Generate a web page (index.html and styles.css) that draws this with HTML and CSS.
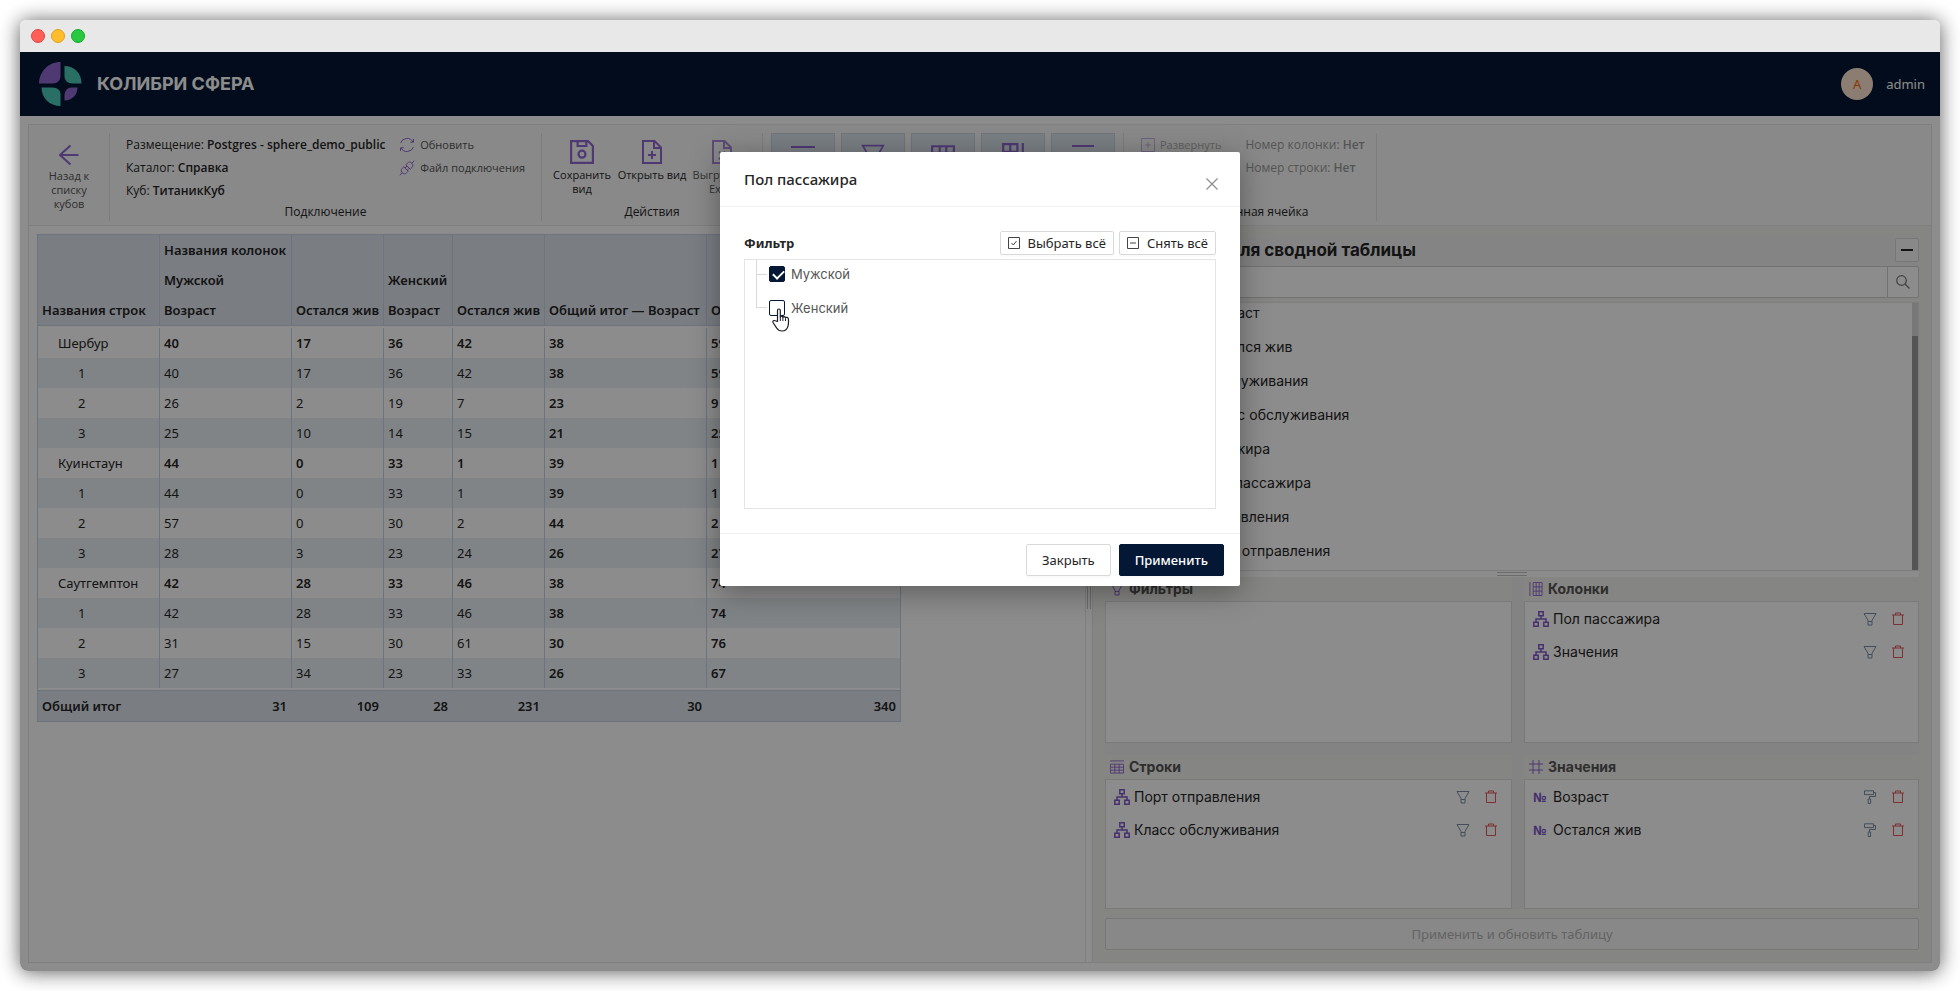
FILE: index.html
```html
<!DOCTYPE html>
<html lang="ru">
<head>
<meta charset="utf-8">
<title>Колибри Сфера</title>
<link rel="stylesheet" href="styles.css">
</head>
<body>
<svg class="sprite" aria-hidden="true">
  <symbol id="i-back" viewBox="0 0 20 20"><path d="M19.500 10H1M11.500 .5 1 10l10.500 9.500"/></symbol>
  <symbol id="i-refresh" viewBox="0 0 16 16"><path d="M1.600 6A6.800 6.800 0 0 1 14 5M14.400 10A6.800 6.800 0 0 1 2 11M14.500 2v3.200h-3.200M1.500 14v-3.200h3.200"/></symbol>
  <symbol id="i-plug" viewBox="0 0 16 16"><path d="M.8 15.200 3.200 12.800M15.200.8l-2.400 2.400M3.200 12.800c-1.400-1.400-1.400-3 0-4.400l1.600-1.600 4.400 4.400-1.600 1.600c-1.400 1.400-3 1.400-4.400 0zM12.800 3.200c-1.400-1.400-3-1.400-4.400 0L6.800 4.800l4.400 4.400 1.600-1.600c1.400-1.400 1.400-3 0-4.400zM6 8l2-2M8.500 10l1.500-1.500"/></symbol>
  <symbol id="i-save" viewBox="0 0 22 22"><path d="M1 1h15.500L21 5.500V21H1zM7 1v4.500h8V1"/><circle cx="11" cy="13" r="3.200"/></symbol>
  <symbol id="i-fileadd" viewBox="0 0 20 24"><path d="M1 1h11.500L19 7.500V23H1zM12 1v7h7M10 11v8M6 15h8"/></symbol>
  <symbol id="i-filex" viewBox="0 0 20 24"><path d="M1 1h11.500L19 7.500V23H1zM12 1v7h7M7 11.500l6 8M13 11.500l-6 8"/></symbol>
  <symbol id="i-lines" viewBox="0 0 24 22"><path d="M0 3h24M0 9h4M7 9h17M0 15h4M7 15h17M0 21h24"/></symbol>
  <symbol id="i-funnel" viewBox="0 0 14 14"><path d="M1 1.500h12L9 8.500v4.500H5V8.500zM5 9.500h4"/></symbol>
  <symbol id="i-grid" viewBox="0 0 22 22"><path d="M1 3h20v18H1zM1 9h20M1 15h20M8 3v18M14 3v18"/></symbol>
  <symbol id="i-gridbar" viewBox="0 0 20 22"><path d="M1 1h13v20H1zM1 8h13M1 14h13M7.500 1v20M19 0v22"/></symbol>
  <symbol id="i-expand" viewBox="0 0 14 14"><path d="M.5.5h13v13H.5zM7 4v6M4 7h6"/></symbol>
  <symbol id="i-cols" viewBox="0 0 14 15"><path d="M.5 0v15M4 .5h9.500v14H4zM4 5.200h9.500M4 9.800h9.500M7.200 .5v14M10.400 .5v14"/></symbol>
  <symbol id="i-rows" viewBox="0 0 15 14"><path d="M0 .5h15M.5 4h14v9.500H.5zM.5 7.200h14M.5 10.400h14M5.200 4v9.500M9.800 4v9.500"/></symbol>
  <symbol id="i-hash" viewBox="0 0 14 14"><path d="M4 0v14M10 0v14M0 4h14M0 10h14"/></symbol>
  <symbol id="i-tree" viewBox="0 0 16 16"><path d="M5.800.8h4.400v4H5.800zM.8 11.200h4.400v4H.8zM10.800 11.200h4.400v4h-4.400zM8 4.800V8M3 11V8h10v3"/></symbol>
  <symbol id="i-trash" viewBox="0 0 12 14"><path d="M0 3h12M3.500 3V1h5v2M1.500 3v9.500h9V3"/></symbol>
  <symbol id="i-roller" viewBox="0 0 12 14"><path d="M.5.8h9v3.800h-9zM9.500 2.500h2v4h-6V9M4.200 9h2.400v4.500H4.200z"/></symbol>
  <symbol id="i-search" viewBox="0 0 14 14"><circle cx="5.500" cy="5.500" r="4.800"/><path d="M9 9l4.500 4.500"/></symbol>
  <symbol id="i-check" viewBox="0 0 12 12"><path d="M.5.5h11v11H.5zM3.500 6l1.800 2 3.200-4"/></symbol>
  <symbol id="i-minus" viewBox="0 0 12 12"><path d="M.5.5h11v11H.5zM3 6h6"/></symbol>
  <symbol id="i-close" viewBox="0 0 12 12"><path d="M.5.5l11 11M11.500.5l-11 11"/></symbol>
</svg>

<div class="window">
  <div class="titlebar"><i class="dot red"></i><i class="dot yellow"></i><i class="dot green"></i></div>
  <div class="app">
    <header class="header">
      <svg class="logo" viewBox="0 0 43 44" aria-hidden="true">
        <path fill="#9068cf" d="M21.500 0v14c0 4-3 7.500-8 7.500H0C0 10 9 0 21.500 0z"/>
        <path fill="#4bcabb" d="M25.500 4C35 4 42.500 11 42.500 21.500h-9c-5 0-8-3-8-7.500z"/>
        <path fill="#4bcabb" d="M2.500 25.500h11c5 0 8 3 8 7V44C10.500 44 2.500 36 2.500 25.500z"/>
        <path fill="#9068cf" d="M38.500 25.500C38.500 33 33 38.500 25.500 38.500v-5c0-5 3-8 7-8z"/>
      </svg>
      <span class="brand">КОЛИБРИ СФЕРА</span>
      <span class="avatar">A</span>
      <span class="user">admin</span>
    </header>

    <main class="content">
      <div class="toolbar">
        <div class="group back-group">
          <button class="tool back"><svg class="ic ic20"><use href="#i-back"/></svg><span>Назад к списку кубов</span></button>
        </div>
        <div class="group conn">
          <div class="conn-cols">
            <div class="facts">
              <span>Размещение: <b>Postgres - sphere_demo_public</b></span>
              <span>Каталог: <b>Справка</b></span>
              <span>Куб: <b>ТитаникКуб</b></span>
            </div>
            <div class="facts">
              <button class="mini"><svg class="ic ic16"><use href="#i-refresh"/></svg>Обновить</button>
              <button class="mini"><svg class="ic ic16"><use href="#i-plug"/></svg>Файл подключения</button>
            </div>
          </div>
          <div class="caption">Подключение</div>
        </div>
        <div class="group actions">
          <div class="tools">
            <button class="tool"><svg class="ic ic24 bold"><use href="#i-save"/></svg><span>Сохранить вид</span></button>
            <button class="tool"><svg class="ic ic24 bold"><use href="#i-fileadd"/></svg><span>Открыть&nbsp;вид</span></button>
            <button class="tool dim"><svg class="ic ic24 bold"><use href="#i-filex"/></svg><span>Выгрузка&nbsp;в Excel</span></button>
          </div>
          <div class="caption">Действия</div>
        </div>
        <div class="group view">
          <div class="toggles">
            <button class="toggle" aria-label="Список полей"><svg class="ic ic24 bold"><use href="#i-lines"/></svg></button>
            <button class="toggle" aria-label="Фильтры"><svg class="ic ic24"><use href="#i-funnel"/></svg></button>
            <button class="toggle" aria-label="Строки"><svg class="ic ic24 bold"><use href="#i-grid"/></svg></button>
            <button class="toggle" aria-label="Колонки"><svg class="ic ic24 bold"><use href="#i-gridbar"/></svg></button>
            <button class="toggle" aria-label="Итоги"><i class="bar"></i></button>
          </div>
        </div>
        <div class="group cell">
          <div class="conn-cols faded">
            <div class="facts"><button class="mini"><svg class="ic ic14"><use href="#i-expand"/></svg>Развернуть</button></div>
            <div class="facts"><span>Номер колонки: <b>Нет</b></span><span>Номер строки: <b>Нет</b></span></div>
          </div>
          <div class="caption">Выделенная ячейка</div>
        </div>
      </div>

      <div class="split">
        <section class="sheet">
          <table class="pivot">
            <colgroup><col class="c1"><col class="c2"><col class="c3"><col class="c4"><col class="c5"><col class="c6"><col class="c7"></colgroup>
            <thead>
              <tr><th></th><th>Названия колонок</th><th></th><th></th><th></th><th></th><th></th></tr>
              <tr><th></th><th>Мужской</th><th></th><th>Женский</th><th></th><th></th><th></th></tr>
              <tr><th>Названия строк</th><th>Возраст</th><th>Остался жив</th><th>Возраст</th><th>Остался жив</th><th>Общий итог — Возраст</th><th>Общий итог — Остался жив</th></tr>
            </thead>
            <tbody class="gap"><tr><td colspan="7"></td></tr></tbody>
            <tbody class="rows">
              <tr class="sum"><td>Шербур</td><td>40</td><td>17</td><td>36</td><td>42</td><td>38</td><td>59</td></tr>
              <tr><td>1</td><td>40</td><td>17</td><td>36</td><td>42</td><td>38</td><td>59</td></tr>
              <tr><td>2</td><td>26</td><td>2</td><td>19</td><td>7</td><td>23</td><td>9</td></tr>
              <tr><td>3</td><td>25</td><td>10</td><td>14</td><td>15</td><td>21</td><td>25</td></tr>
              <tr class="sum"><td>Куинстаун</td><td>44</td><td>0</td><td>33</td><td>1</td><td>39</td><td>1</td></tr>
              <tr><td>1</td><td>44</td><td>0</td><td>33</td><td>1</td><td>39</td><td>1</td></tr>
              <tr><td>2</td><td>57</td><td>0</td><td>30</td><td>2</td><td>44</td><td>2</td></tr>
              <tr><td>3</td><td>28</td><td>3</td><td>23</td><td>24</td><td>26</td><td>27</td></tr>
              <tr class="sum"><td>Саутгемптон</td><td>42</td><td>28</td><td>33</td><td>46</td><td>38</td><td>74</td></tr>
              <tr><td>1</td><td>42</td><td>28</td><td>33</td><td>46</td><td>38</td><td>74</td></tr>
              <tr><td>2</td><td>31</td><td>15</td><td>30</td><td>61</td><td>30</td><td>76</td></tr>
              <tr><td>3</td><td>27</td><td>34</td><td>23</td><td>33</td><td>26</td><td>67</td></tr>
            </tbody>
            <tbody class="gap"><tr><td colspan="7"></td></tr></tbody>
            <tfoot><tr><th>Общий итог</th><td>31</td><td>109</td><td>28</td><td>231</td><td>30</td><td>340</td></tr></tfoot>
          </table>
        </section>
        <div class="vsplit"><i class="vgrip"></i></div>
        <aside class="fields">
          <div class="fields-head"><h2>Список полей для сводной таблицы</h2><button class="collapse" aria-label="Свернуть"><i></i></button></div>
          <div class="search"><input type="text" aria-label="Поиск"><button aria-label="Найти"><svg class="ic ic14"><use href="#i-search"/></svg></button></div>
          <div class="list-wrap">
            <ul class="list">
              <li class="deep">Возраст</li><li class="deep">Остался жив</li>
              <li>Класс обслуживания</li><li class="deep">Класс обслуживания</li>
              <li>Пол пассажира</li><li class="deep">Пол пассажира</li>
              <li>Порт отправления</li><li class="deep">Порт отправления</li>
            </ul>
            <div class="track"><i class="thumb"></i></div>
          </div>
          <div class="hsplit"><i class="hgrip"></i></div>
          <div class="zones">
            <section class="zone"><h3><svg class="ic ic14"><use href="#i-funnel"/></svg>Фильтры</h3><div class="box"></div></section>
            <section class="zone"><h3><svg class="ic ic14"><use href="#i-cols"/></svg>Колонки</h3><div class="box">
              <div class="item"><svg class="ic ic16 mid"><use href="#i-tree"/></svg><span>Пол пассажира</span><button aria-label="Фильтр"><svg class="ic ic14 slate"><use href="#i-funnel"/></svg></button><button aria-label="Удалить"><svg class="ic ic14 red-ic"><use href="#i-trash"/></svg></button></div>
              <div class="item"><svg class="ic ic16 mid"><use href="#i-tree"/></svg><span>Значения</span><button aria-label="Фильтр"><svg class="ic ic14 slate"><use href="#i-funnel"/></svg></button><button aria-label="Удалить"><svg class="ic ic14 red-ic"><use href="#i-trash"/></svg></button></div>
            </div></section>
            <section class="zone"><h3><svg class="ic ic14"><use href="#i-rows"/></svg>Строки</h3><div class="box">
              <div class="item"><svg class="ic ic16 mid"><use href="#i-tree"/></svg><span>Порт отправления</span><button aria-label="Фильтр"><svg class="ic ic14 slate"><use href="#i-funnel"/></svg></button><button aria-label="Удалить"><svg class="ic ic14 red-ic"><use href="#i-trash"/></svg></button></div>
              <div class="item"><svg class="ic ic16 mid"><use href="#i-tree"/></svg><span>Класс обслуживания</span><button aria-label="Фильтр"><svg class="ic ic14 slate"><use href="#i-funnel"/></svg></button><button aria-label="Удалить"><svg class="ic ic14 red-ic"><use href="#i-trash"/></svg></button></div>
            </div></section>
            <section class="zone"><h3><svg class="ic ic14"><use href="#i-hash"/></svg>Значения</h3><div class="box">
              <div class="item"><b class="num">№</b><span>Возраст</span><button aria-label="Формат"><svg class="ic ic14 slate"><use href="#i-roller"/></svg></button><button aria-label="Удалить"><svg class="ic ic14 red-ic"><use href="#i-trash"/></svg></button></div>
              <div class="item"><b class="num">№</b><span>Остался жив</span><button aria-label="Формат"><svg class="ic ic14 slate"><use href="#i-roller"/></svg></button><button aria-label="Удалить"><svg class="ic ic14 red-ic"><use href="#i-trash"/></svg></button></div>
            </div></section>
          </div>
          <button class="apply" disabled>Применить и обновить таблицу</button>
        </aside>
      </div>
    </main>

    <div class="overlay">
      <div class="modal" role="dialog" aria-labelledby="modal-title">
        <div class="modal-head"><h1 id="modal-title">Пол пассажира</h1><button class="close" aria-label="Закрыть окно"><svg class="ic ic12"><use href="#i-close"/></svg></button></div>
        <div class="modal-body">
          <div class="filter-head">
            <h4>Фильтр</h4>
            <button class="btn small"><svg class="ic ic12"><use href="#i-check"/></svg>Выбрать всё</button>
            <button class="btn small"><svg class="ic ic12"><use href="#i-minus"/></svg>Снять всё</button>
          </div>
          <div class="tree">
            <label class="node"><i class="branch"></i><input type="checkbox" checked><span>Мужской</span></label>
            <label class="node last"><i class="branch"></i><input type="checkbox"><span>Женский</span></label>
            <svg class="cursor" viewBox="0 0 18 24" aria-hidden="true"><path fill="#fff" stroke="#1b1b2b" stroke-width="1.200" stroke-linejoin="round" d="M5.500 13.500V2.500c0-2 2.800-2 2.800 0V9c.3-1.400 2.500-1.200 2.600.4.500-1.200 2.500-1 2.600.6.600-1 2.700-.8 2.900 1 .2 2.500.1 5-.3 6.800-.8 3.200-2.800 5.200-6.100 5.200-2.800 0-4.300-1.200-5.600-3.300L1 14.500c-.6-1.500.8-2.500 2.200-1.700z"/><path fill="none" stroke="#1b1b2b" d="M8.300 8.500V13M10.900 9.500V13M13.500 10.500V13"/></svg>
          </div>
        </div>
        <div class="modal-foot"><button class="btn">Закрыть</button><button class="btn primary">Применить</button></div>
      </div>
    </div>
  </div>
</div>
</body>
</html>
```
FILE: styles.css
```css
* { box-sizing: border-box; }
body { margin: 0; padding: 20px; height: 100vh; background: #fff; color: #262626; font: 13px/20px "Noto Sans", "Open Sans", sans-serif; }
button { font: inherit; color: inherit; background: none; border: 0; padding: 0; margin: 0; }
h1, h2, h3, h4, ul { margin: 0; padding: 0; }
b { font-weight: 600; }
.sprite { position: absolute; width: 0; height: 0; }
.ic { fill: none; stroke: #9068cf; stroke-width: 1; flex: none; display: block; }
.ic12 { width: 12px; height: 12px; }
.ic14 { width: 14px; height: 14px; }
.ic16 { width: 16px; height: 16px; }
.ic20 { width: 20px; height: 20px; stroke-width: 2; }
.ic24 { width: 24px; height: 24px; }
.bold { stroke-width: 2; }
.mid { stroke-width: 1.5; stroke: #8058c8; }
.slate { stroke: #7d8ea5; }
.red-ic { stroke: #e2585b; }

.window { display: flex; flex-direction: column; min-height: 100%; border-radius: 6px 6px 8px 8px; box-shadow: 0 1px 20px rgba(0, 0, 0, .65); }
.titlebar { display: flex; align-items: center; gap: 6px; height: 32px; padding: 0 11px; background: #e8e8e8; border-radius: 6px 6px 0 0; }
.dot { width: 14px; height: 14px; border-radius: 50%; border: 1px solid; }
.red { background: #ff5f57; border-color: #e2463f; }
.yellow { background: #ffbd2e; border-color: #e1a116; }
.green { background: #28c940; border-color: #12ac28; }
.app { position: relative; flex: 1; display: flex; flex-direction: column; background: #fff; border-radius: 0 0 8px 8px; overflow: hidden; }

.header { display: flex; align-items: center; height: 64px; padding: 0 15px 0 19px; background: #041734; color: #fff; }
.logo { width: 43px; height: 44px; }
.brand { flex: 1; margin-left: 15px; font: 700 18px/24px Inter, "Noto Sans", sans-serif; }
.avatar { width: 32px; height: 32px; border-radius: 50%; background: #fde3cf; color: #f56a00; text-align: center; line-height: 32px; }
.user { margin-left: 13px; font-size: 13px; }

.content { flex: 1; display: flex; flex-direction: column; margin: 8px; border: 1px solid #e8e8e8; }
.toolbar { display: flex; height: 101px; padding: 8px 0 4px; background: #f9f9f9; border-bottom: 1px solid #e8e8e8; font: 12px "Open Sans", "Noto Sans", sans-serif; }
.group { display: flex; flex-direction: column; border-right: 1px solid #e3e3e3; color: #262626; }
.caption { margin-top: auto; text-align: center; line-height: 18px; }
.back-group { width: 81px; align-items: center; }
.tool { display: flex; flex-direction: column; align-items: center; gap: 4px; width: 70px; font-size: 11px; line-height: 14px; }
.back { margin-top: 12px; width: 60px; gap: 4px; color: #555; }
.conn { width: 432px; padding-left: 16px; }
.conn .caption { padding-right: 16px; }
.conn-cols { display: flex; justify-content: space-between; padding-right: 16px; }
.facts { display: flex; flex-direction: column; white-space: nowrap; }
.facts > * { line-height: 23px; }
.mini { display: flex; align-items: center; gap: 5px; color: #555; font-size: 11px; }
.actions { width: 221px; padding: 0 5px; }
.tools { display: flex; padding-top: 7px; }
.dim { opacity: .75; }
.view { width: 361px; padding-left: 8px; }
.toggles { display: flex; gap: 6px; }
.toggle { display: flex; justify-content: center; width: 64px; height: 64px; padding-top: 9px; background: #dfe7f0; border: 1px solid #c9d6e4; }
.bar { width: 22px; height: 2px; margin-top: 2px; background: #9068cf; }
.cell { width: 253px; padding: 0 17px; }
.cell .conn-cols { justify-content: flex-start; gap: 24px; padding-right: 0; }
.faded { opacity: .45; }

.split { flex: 1; display: flex; min-height: 0; }
.sheet { flex: 1 1 0; padding: 8px; background: #fff; border-right: 1px solid #e8e8e8; }
.pivot { width: 864px; table-layout: fixed; border-collapse: separate; border-spacing: 0; border: 1px solid #c5d3e3; border-width: 0 0 1px 1px; }
.c1 { width: 122px; } .c2 { width: 132px; } .c3 { width: 92px; } .c4 { width: 69px; } .c5 { width: 92px; } .c6 { width: 162px; }
.pivot th, .pivot td { height: 30px; padding: 0 4px; border-right: 1px solid #c5d3e3; text-align: left; white-space: nowrap; overflow: hidden; }
.pivot th { font-weight: 600; background: #dfe5ee; }
.pivot thead tr:first-child th { border-top: 1px solid #c5d3e3; height: 31px; }
.pivot thead tr:last-child th { border-bottom: 1px solid #c5d3e3; height: 31px; }
.pivot .gap td { height: 2px; }
.rows tr:nth-child(even) { background: #e9f1f5; }
.pivot .rows td:first-child { padding-left: 40px; }
.pivot .rows .sum td:first-child { padding-left: 20px; }
.rows td:nth-child(n+6), .sum td:nth-child(n+2) { font-weight: 600; }
.pivot tfoot th, .pivot tfoot td { border-top: 1px solid #c5d3e3; border-right-color: #dfe5ee; height: 31px; background: #dfe5ee; font-weight: 600; }
.pivot tfoot td { text-align: right; }
.pivot tfoot td:last-child { border-right-color: #c5d3e3; }

.vsplit { display: flex; align-items: center; justify-content: center; width: 6px; }
.vgrip { width: 4px; height: 30px; border: 1px solid #c4c4c4; border-width: 0 1px; }
.fields { display: flex; flex-direction: column; width: 839px; padding: 12px; background: #f3f2ee; border-left: 1px solid #e3e3e6; font-family: Inter, "Noto Sans", sans-serif; }
.fields-head { display: flex; align-items: center; justify-content: space-between; height: 28px; padding-bottom: 4px; background: #f0f0f0; }
.fields-head h2 { font-size: 17px; font-weight: 700; line-height: 24px; }
.collapse { display: flex; align-items: center; justify-content: center; width: 24px; height: 24px; background: #f7f7f7; border: 1px solid #d9d9d9; border-radius: 2px; }
.collapse i { width: 12px; height: 2px; background: #262626; }
.search { display: flex; height: 32px; margin-bottom: 4px; }
.search input { flex: 1; min-width: 0; padding: 4px 11px; border: 1px solid #d0d0d0; background: #fff; font: inherit; }
.search button { display: flex; align-items: center; justify-content: center; width: 32px; margin-left: -1px; border: 1px solid #d0d0d0; border-radius: 0 2px 2px 0; background: #fff; }
.search .ic { stroke: #777; stroke-width: 1.2; }
.list-wrap { flex: 268 1 0; display: flex; min-height: 0; overflow: hidden; background: #fff; border: 1px solid #e3e3e3; }
.list { flex: 1; list-style: none; margin-top: -7px; font-size: 14px; line-height: 34px; }
.list li { padding-left: 57px; }
.list .deep { padding-left: 98px; }
.track { width: 6px; padding-top: 33px; background: #d9d9d9; }
.thumb { display: block; height: 100%; background: #9c9c9c; }
.hsplit { display: flex; align-items: center; justify-content: center; height: 6px; background: #fff; }
.hgrip { width: 30px; height: 4px; border: 1px solid #c4c4c4; border-width: 1px 0; }
.zones { flex: 333 1 0; display: grid; grid-template-columns: 407fr 395fr; grid-template-rows: 166fr 154fr; gap: 12px; background: #efefef; }
.zone { display: flex; flex-direction: column; background: #f3f2ee; min-height: 0; }
.zone h3 { display: flex; align-items: center; gap: 5px; height: 24px; padding-left: 5px; font-size: 14px; font-weight: 700; line-height: 24px; color: #555; }
.box { flex: 1; background: #fff; border: 1px solid #dedede; }
.item { display: flex; align-items: center; height: 33px; padding: 0 13px 0 8px; font-size: 14px; }
.item span { flex: 1; margin-left: 4px; }
.item button { margin-left: 14px; }
.num { width: 16px; color: #8058c8; font: 700 13px "Noto Sans", sans-serif; }
.apply { height: 32px; margin-top: 9px; background: #f7f7f7; border: 1px solid #d9d9d9; border-radius: 2px; color: #b5b5b5; font: 13px "Noto Sans", sans-serif; }

.overlay { position: absolute; inset: 0; display: flex; justify-content: center; align-items: flex-start; padding-top: 100px; background: rgba(0, 0, 0, .45); }
.modal { width: 520px; background: #fff; border-radius: 2px; box-shadow: 0 6px 30px rgba(0, 0, 0, .35); }
.modal-head { display: flex; align-items: center; justify-content: space-between; height: 55px; padding: 0 22px 0 24px; border-bottom: 1px solid #f0f0f0; }
.modal-head h1 { font-size: 15px; font-weight: 500; line-height: 22px; }
.close { padding: 10px 0 0; }
.close .ic { stroke: #8c8c8c; stroke-width: 1.2; }
.modal-body { padding: 24px; }
.filter-head { display: flex; align-items: center; gap: 5px; margin-bottom: 4px; }
.filter-head h4 { flex: 1; font-size: 13px; font-weight: 700; }
.btn { height: 32px; padding: 0 15px; border: 1px solid #d9d9d9; border-radius: 2px; background: #fff; box-shadow: 0 2px 0 rgba(0, 0, 0, .02); font-size: 13px; }
.small { display: flex; align-items: center; gap: 8px; height: 24px; padding: 0 7px; }
.small .ic { stroke: #444; }
.tree { position: relative; height: 250px; overflow: hidden; border: 1px solid #e3e4e8; padding-left: 11px; }
.node { display: flex; align-items: center; height: 34px; color: #555; font: 13px/20px Inter, "Noto Sans", sans-serif; }
.node:first-child { margin-top: -3px; }
.branch { align-self: stretch; width: 11px; border-left: 1px solid #d9d9d9; background: linear-gradient(#d9d9d9, #d9d9d9) 0 50% / 11px 1px no-repeat; }
.last .branch { align-self: flex-start; height: 17px; background: none; border-bottom: 1px solid #d9d9d9; }
.node input { appearance: none; width: 16px; height: 16px; margin: 0 6px 0 2px; border: 1px solid #041734; border-radius: 2px; background: #fff; }
.node input:checked { background: #041734; }
.node input:checked::after { content: ""; display: block; width: 5px; height: 9px; margin: 1px 0 0 5px; border: solid #fff; border-width: 0 2px 2px 0; rotate: 45deg; }
.cursor { position: absolute; left: 27px; top: 48px; width: 18px; height: 24px; }
.modal-foot { display: flex; justify-content: flex-end; gap: 8px; padding: 10px 16px; border-top: 1px solid #f0f0f0; }
.primary { background: #041734; border-color: #041734; color: #fff; font-weight: 500; }
```
